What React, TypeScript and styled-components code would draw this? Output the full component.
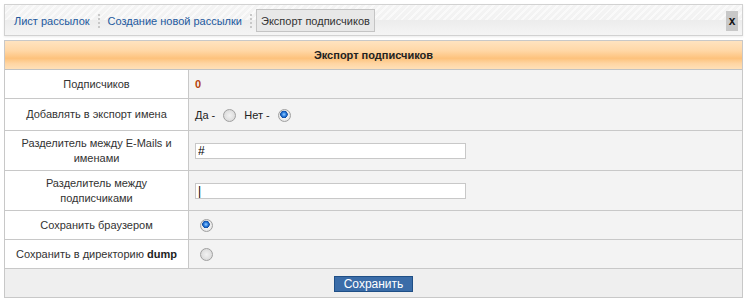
import React from 'react'
import styled, { createGlobalStyle } from 'styled-components'

const GlobalStyle = createGlobalStyle`
  html, body {
    margin: 0;
    padding: 0;
    background: #ffffff;
  }
  body {
    font-family: "Liberation Sans", Arial, sans-serif;
    font-size: 11px;
    color: #333333;
  }
`

const Page = styled.div`
  padding: 4px 5px 0 4px;
  width: 739px;
`

const TabBar = styled.div`
  display: flex;
  align-items: center;
  padding: 1px 0 0 5px;
  box-sizing: border-box;
  height: 32px;
  border: 1px solid #d2d2d2;
  box-shadow: 0 1px 2px rgba(0, 0, 0, 0.08);
  background:
    repeating-linear-gradient(135deg, rgba(255, 255, 255, 0.55) 0 2px, transparent 2px 5px) top left / 100% 50% no-repeat,
    linear-gradient(#f4f4f4 0, #f2f2f2 50%, #ececec 50%, #f5f5f5 100%);
`

const TabLink = styled.a`
  padding: 0 4px;
  font-size: 11px;
  color: #235a9f;
  text-decoration: none;
  white-space: nowrap;
  cursor: pointer;
`

const ActiveTab = styled.span`
  display: flex;
  align-items: center;
  height: 21px;
  padding: 0 4px;
  border: 1px solid #c4c4c4;
  background: #e8e8e8;
  font-size: 11px;
  color: #333333;
  white-space: nowrap;
`

const Separator = styled.span`
  width: 0;
  height: 14px;
  margin: 0 4px;
  border-left: 2px dotted #c8c8c8;
`

const CloseButton = styled.span`
  margin-left: auto;
  margin-right: 4px;
  width: 12px;
  height: 20px;
  display: flex;
  align-items: center;
  justify-content: center;
  background: #c8c8c8;
  font-size: 12px;
  font-weight: bold;
  color: #141414;
  line-height: 1;
  cursor: pointer;
`

const Panel = styled.div`
  margin-top: 4px;
  border: 1px solid #c8c8c8;
`

const PanelHeader = styled.div`
  height: 28px;
  display: flex;
  align-items: center;
  justify-content: center;
  font-weight: bold;
  font-size: 11px;
  color: #222222;
  border-bottom: 1px solid #c2c2c2;
  background: linear-gradient(#ffe3c0 0, #ffd7a6 35%, #fdc27c 62%, #ffd5a2 80%, #ffe0b8 100%);
`

const Row = styled.div<{ $h: number }>`
  display: grid;
  grid-template-columns: 184px 1fr;
  height: ${p => p.$h}px;
  border-bottom: 1px solid #c8c8c8;
`

const Label = styled.div`
  display: flex;
  align-items: center;
  justify-content: center;
  text-align: center;
  line-height: 15px;
  padding: 0 8px;
  background: #ffffff;
  border-right: 1px solid #c8c8c8;
  color: #333333;

  b {
    color: #222222;
  }
`

const Value = styled.div`
  display: flex;
  align-items: center;
  padding: 0 6px;
  background: #f3f3f3;
  color: #222222;
`

const Count = styled.span`
  font-weight: bold;
  color: #b5420d;
`

const Choice = styled.label`
  display: flex;
  align-items: center;
  color: #222222;
`

const Radio = styled.input.attrs({ type: 'radio' })<{ $first?: boolean }>`
  appearance: none;
  -webkit-appearance: none;
  width: 13px;
  height: 13px;
  margin: 1px ${p => (p.$first ? 6 : 8)}px 0 ${p => (p.$first ? 5 : 8)}px;
  border-radius: 50%;
  border: 1px solid #a0a0a0;
  background: radial-gradient(circle at 50% 50%, #f2f2f2 0, #e0e0e0 60%, #cfcfcf 100%);
  box-sizing: border-box;

  &:checked {
    background:
      radial-gradient(circle at 45% 40%, #9cd0ff 0, #2c7ee0 2px, #0d4aa0 3.5px, transparent 4px),
      radial-gradient(circle, #ffffff 0, #e6e6e6 70%, #cccccc 100%);
  }
`

const TextInput = styled.input`
  width: 271px;
  height: 16px;
  box-sizing: border-box;
  border: 1px solid #c8c8c8;
  background: #ffffff;
  padding: 0 2px;
  font-family: "Liberation Sans", Arial, sans-serif;
  font-size: 12px;
  color: #000000;
  outline: none;
`

const Footer = styled.div`
  height: 28px;
  display: flex;
  justify-content: center;
  align-items: flex-start;
  padding-top: 7px;
  box-sizing: border-box;
  background: #efefef;
`

const SaveButton = styled.button`
  width: 79px;
  height: 16px;
  padding: 0;
  border: 1px solid #1f4f86;
  background: #3a6ca8;
  color: #ffffff;
  font-family: "Liberation Sans", Arial, sans-serif;
  font-size: 12px;
  line-height: 14px;
  cursor: pointer;
`

export default function App() {
  return (
    <Page>
      <GlobalStyle />
      <TabBar>
        <TabLink>Лист рассылок</TabLink>
        <Separator />
        <TabLink>Создание новой рассылки</TabLink>
        <Separator />
        <ActiveTab>Экспорт подписчиков</ActiveTab>
        <CloseButton>x</CloseButton>
      </TabBar>

      <Panel>
        <PanelHeader>Экспорт подписчиков</PanelHeader>

        <Row $h={28}>
          <Label>Подписчиков</Label>
          <Value>
            <Count>0</Count>
          </Value>
        </Row>

        <Row $h={31}>
          <Label>Добавлять в экспорт имена</Label>
          <Value>
            <Choice>
              Да -
              <Radio name="names" />
            </Choice>
            <Choice>
              Нет -
              <Radio name="names" defaultChecked />
            </Choice>
          </Value>
        </Row>

        <Row $h={39}>
          <Label>
            Разделитель между E-Mails и
            <br />
            именами
          </Label>
          <Value>
            <TextInput defaultValue="#" />
          </Value>
        </Row>

        <Row $h={39}>
          <Label>
            Разделитель между
            <br />
            подписчиками
          </Label>
          <Value>
            <TextInput defaultValue="|" />
          </Value>
        </Row>

        <Row $h={28}>
          <Label>Сохранить браузером</Label>
          <Value>
            <Radio name="target" $first defaultChecked />
          </Value>
        </Row>

        <Row $h={28}>
          <Label>
            <span>
              Сохранить в директорию <b>dump</b>
            </span>
          </Label>
          <Value>
            <Radio name="target" $first />
          </Value>
        </Row>

        <Footer>
          <SaveButton>Сохранить</SaveButton>
        </Footer>
      </Panel>
    </Page>
  )
}
